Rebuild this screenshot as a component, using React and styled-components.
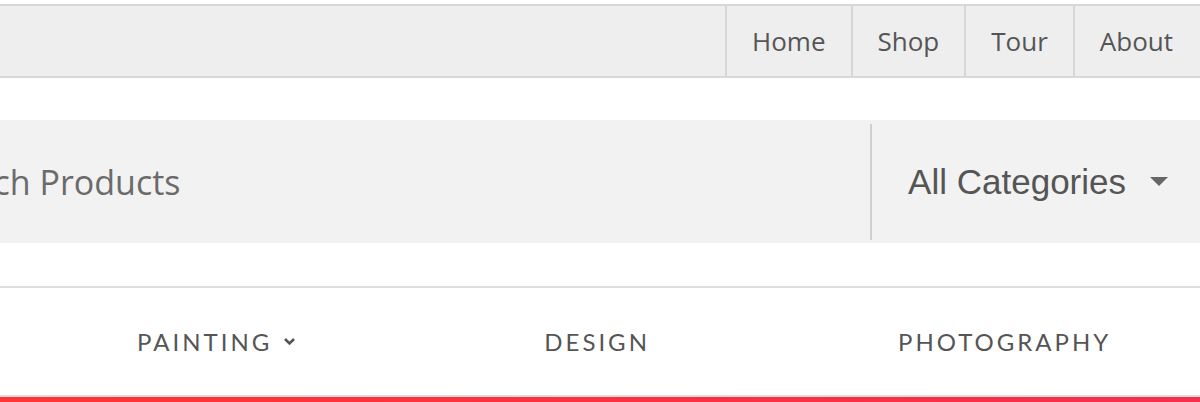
import React from 'react';
import styled, { createGlobalStyle } from "styled-components";

const GlobalStyle = createGlobalStyle`
  html, body {
    margin: 0;
    padding: 0;
    background: #fff;
    overflow: hidden;
  }
`;

const Page = styled.div`
  width: 1200px;
  height: 402px;
  overflow: hidden;
`;

const TopBar = styled.div`
  margin-top: 4px;
  height: 70px;
  background-color: #eeeeee;
  border-top: 2px solid #d8d8d8;
  border-bottom: 2px solid #d8d8d8;
  display: flex;
  justify-content: flex-end;
`;

const TopLink = styled.a`
  display: flex;
  align-items: center;
  padding: 0 25px;
  border-left: 2px solid #d6d6d6;
  font-family: "Open Sans", "Inter", sans-serif;
  font-size: 26px;
  color: #555;
  text-decoration: none;

  &:last-child {
    padding-right: 27px;
  }
`;

const SearchRow = styled.div`
  margin-top: 42px;
  height: 123px;
  background-color: #f2f2f2;
  display: flex;
  align-items: center;
`;

const SearchInput = styled.input`
  flex: 1;
  min-width: 0;
  margin-left: -77px;
  padding: 0;
  border: none;
  outline: none;
  background: transparent;
  font-family: "Open Sans", "Inter", sans-serif;
  font-size: 34px;
  color: #666;

  &::placeholder {
    color: #6b6b6b;
    opacity: 1;
  }
`;

const CategorySelect = styled.div`
  height: 116px;
  display: flex;
  align-items: center;
  gap: 24px;
  padding: 0 32px 0 36px;
  border-left: 2px solid #cfcfcf;
  font-family: "Liberation Sans", Arial, sans-serif;
  font-size: 35px;
  color: #555;
`;

const Caret = styled.span`
  width: 0;
  height: 0;
  border-left: 9px solid transparent;
  border-right: 9px solid transparent;
  border-top: 9px solid #666;
`;

const MainNav = styled.nav`
  margin-top: 43px;
  height: 107px;
  border-top: 2px solid #dddddd;
  border-bottom: 2px solid #dddddd;
  display: flex;
  align-items: center;
  gap: 248px;
  padding-left: 137px;
`;

const NavItem = styled.a`
  display: flex;
  align-items: center;
  gap: 11px;
  font-family: "Lato", "Open Sans", sans-serif;
  font-size: 24px;
  letter-spacing: 3px;
  color: #555;
  text-decoration: none;
  white-space: nowrap;
`;

const RedBar = styled.div`
  height: 6px;
  background: linear-gradient(90deg, #ff3434, #f72e4c);
`;

const Chevron = () => (
  <svg width="13" height="9" viewBox="0 0 13 9">
    <path d="M2 2 L6.5 6.5 L11 2" fill="none" stroke="#555" strokeWidth="2.6" />
  </svg>
);

const App = () => {
  return (
    <Page>
      <GlobalStyle />
      <TopBar>
        {['Home', 'Shop', 'Tour', 'About'].map((v) => (
          <TopLink key={v}>{v}</TopLink>
        ))}
      </TopBar>

      <SearchRow>
        <SearchInput type="text" placeholder="Search Products" />
        <CategorySelect>
          All Categories
          <Caret />
        </CategorySelect>
      </SearchRow>

      <MainNav>
        <NavItem>PAINTING <Chevron /></NavItem>
        <NavItem>DESIGN</NavItem>
        <NavItem>PHOTOGRAPHY</NavItem>
      </MainNav>
      <RedBar />
    </Page>
  );
};

export default App;
